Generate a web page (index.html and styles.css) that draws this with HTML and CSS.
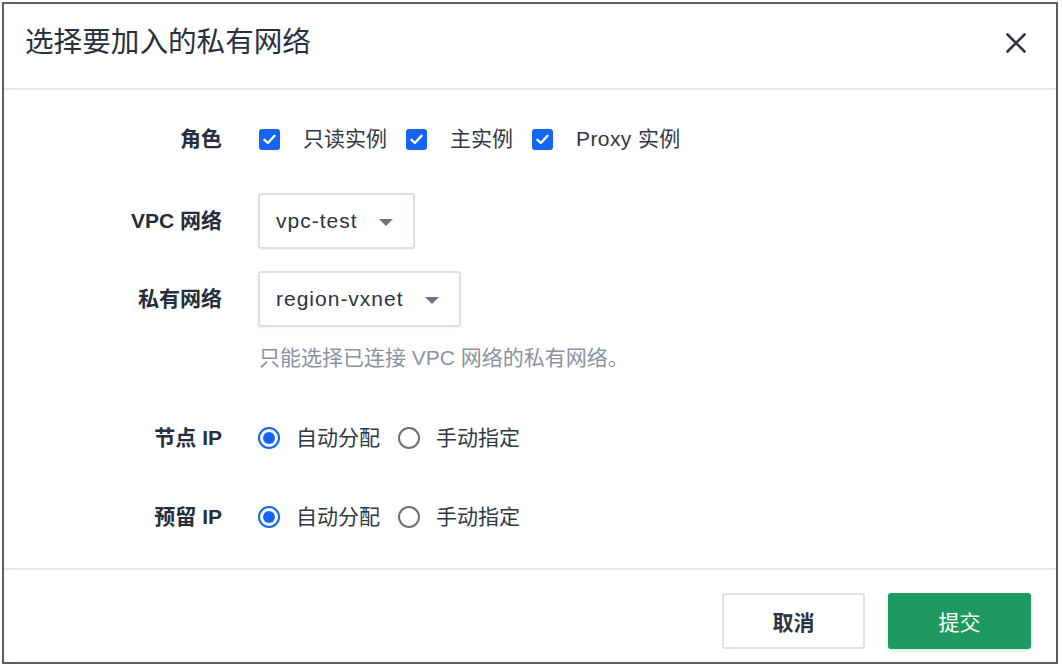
FILE: index.html
```html
<!DOCTYPE html>
<html lang="zh-CN">
<head>
<meta charset="utf-8">
<title>选择要加入的私有网络</title>
<link rel="stylesheet" href="styles.css">
</head>
<body>
<div class="dialog">
  <div class="header">
    <div class="title">选择要加入的私有网络</div>
    <button class="close" aria-label="关闭">
      <svg width="20" height="20" viewBox="0 0 20 20"><path d="M1.5 1.5 L18.5 18.5 M18.5 1.5 L1.5 18.5" stroke="#2b3440" stroke-width="2.6" stroke-linecap="round" fill="none"/></svg>
    </button>
  </div>
  <div class="body">
    <div class="row row-role">
      <div class="label">角色</div>
      <div class="control">
        <span class="check"><svg width="13" height="11" viewBox="0 0 13 11"><path d="M1.5 5.8 L4.9 9 L11.5 1.8" stroke="#fff" stroke-width="2.4" fill="none" stroke-linecap="round" stroke-linejoin="round"/></svg></span>
        <span class="opt opt-check">只读实例</span>
        <span class="check"><svg width="13" height="11" viewBox="0 0 13 11"><path d="M1.5 5.8 L4.9 9 L11.5 1.8" stroke="#fff" stroke-width="2.4" fill="none" stroke-linecap="round" stroke-linejoin="round"/></svg></span>
        <span class="opt opt-check">主实例</span>
        <span class="check"><svg width="13" height="11" viewBox="0 0 13 11"><path d="M1.5 5.8 L4.9 9 L11.5 1.8" stroke="#fff" stroke-width="2.4" fill="none" stroke-linecap="round" stroke-linejoin="round"/></svg></span>
        <span class="opt opt-proxy">Proxy 实例</span>
      </div>
    </div>
    <div class="row row-vpc">
      <div class="label">VPC 网络</div>
      <div class="control">
        <div class="select"><span class="select-text">vpc-test</span><span class="caret"></span></div>
      </div>
    </div>
    <div class="row row-vxnet">
      <div class="label">私有网络</div>
      <div class="control">
        <div class="select"><span class="select-text">region-vxnet</span><span class="caret"></span></div>
      </div>
    </div>
    <div class="hint-row">
      <div></div>
      <div class="hint">只能选择已连接 VPC 网络的私有网络。</div>
    </div>
    <div class="row row-node">
      <div class="label">节点 IP</div>
      <div class="control">
        <span class="radio on"></span><span class="opt opt-radio">自动分配</span>
        <span class="radio"></span><span class="opt opt-radio">手动指定</span>
      </div>
    </div>
    <div class="row row-reserve">
      <div class="label">预留 IP</div>
      <div class="control">
        <span class="radio on"></span><span class="opt opt-radio">自动分配</span>
        <span class="radio"></span><span class="opt opt-radio">手动指定</span>
      </div>
    </div>
  </div>
  <div class="footer">
    <button class="btn btn-cancel">取消</button>
    <button class="btn btn-primary">提交</button>
  </div>
</div>
</body>
</html>
```
FILE: styles.css
```css
* { box-sizing: border-box; }
html, body { margin: 0; padding: 0; background: #ffffff; }
body {
  font-family: "Liberation Sans", "Noto Sans CJK SC", sans-serif;
  color: #2b3440;
  font-size: 21px;
}
.dialog {
  margin: 2px 0 0 2px;
  width: 1056px;
  height: 662px;
  border: 2px solid #5a5f67;
  background: #fff;
  display: flex;
  flex-direction: column;
}
.header {
  height: 86px;
  border-bottom: 2px solid #dfe6ee;
  display: flex;
  justify-content: space-between;
  align-items: flex-start;
  padding: 18px 0 0 21px;
}
.title {
  font-size: 28.6px;
  line-height: 36px;
  color: #27303c;
  font-weight: 400;
  font-family: "Noto Sans CJK SC", sans-serif;
}
.close {
  border: 0;
  background: transparent;
  padding: 0;
  margin: 11px 30px 0 0;
  width: 20px;
  height: 20px;
  display: flex;
}
.body {
  flex: 1;
  padding-top: 21px;
}
.row, .hint-row {
  display: grid;
  grid-template-columns: 218px 1fr;
  column-gap: 36px;
  align-items: center;
  height: 56px;
}
.label {
  text-align: right;
  font-weight: 600;
  color: #252e3a;
  line-height: 30px;
}
.control {
  display: flex;
  align-items: center;
  line-height: 30px;
}
.row-vpc { margin-top: 26px; }
.row-vxnet { margin-top: 22px; }
.hint-row { height: 30px; margin-top: 16px; }
.row-node { margin-top: 37px; }
.row-reserve { margin-top: 23px; }
.hint {
  color: #8a939e;
  padding-left: 1px;
  line-height: 30px;
}
.check {
  width: 21px;
  height: 21px;
  border-radius: 3px;
  background: #1664f5;
  display: flex;
  align-items: center;
  justify-content: center;
  margin-left: 1px;
}
.opt { color: #2f3843; }
.opt-check { margin-left: 23px; margin-right: 18px; }
.opt-proxy { margin-left: 23px; letter-spacing: 0.4px; }
.select {
  height: 56px;
  border: 2px solid #d9e0e8;
  border-radius: 3px;
  display: flex;
  align-items: center;
  padding: 0 20px 0 16px;
  box-shadow: 0 1px 2px rgba(60, 80, 100, 0.08);
}
.select-text { color: #2b3440; letter-spacing: 1px; }
.caret {
  width: 0;
  height: 0;
  border-left: 7px solid transparent;
  border-right: 7px solid transparent;
  border-top: 7px solid #6c7580;
  margin-left: 21px;
  margin-top: 2px;
}
.radio {
  width: 22px;
  height: 22px;
  border-radius: 50%;
  border: 2px solid #6d7177;
  background: #fff;
  display: inline-block;
  position: relative;
}
.radio.on {
  border-color: #1664f5;
}
.radio.on::after {
  content: "";
  position: absolute;
  left: 3px;
  top: 3px;
  width: 12px;
  height: 12px;
  border-radius: 50%;
  background: #1664f5;
}
.opt-radio { margin-left: 16px; margin-right: 18px; }
.footer {
  height: 94px;
  border-top: 2px solid #dfe6ee;
  display: flex;
  justify-content: flex-end;
  align-items: flex-start;
  padding: 23px 25px 0 0;
  gap: 23px;
}
.btn {
  width: 143px;
  height: 56px;
  border-radius: 3px;
  font-family: "Liberation Sans", "Noto Sans CJK SC", sans-serif;
  font-size: 21px;
  cursor: pointer;
}
.btn-cancel {
  background: #fff;
  border: 2px solid #dbe2ea;
  color: #2b3440;
  font-weight: 600;
}
.btn-primary {
  background: #1e9a60;
  border: 0;
  color: #fff;
  box-shadow: 0 2px 4px rgba(30, 154, 96, 0.2);
}
```
